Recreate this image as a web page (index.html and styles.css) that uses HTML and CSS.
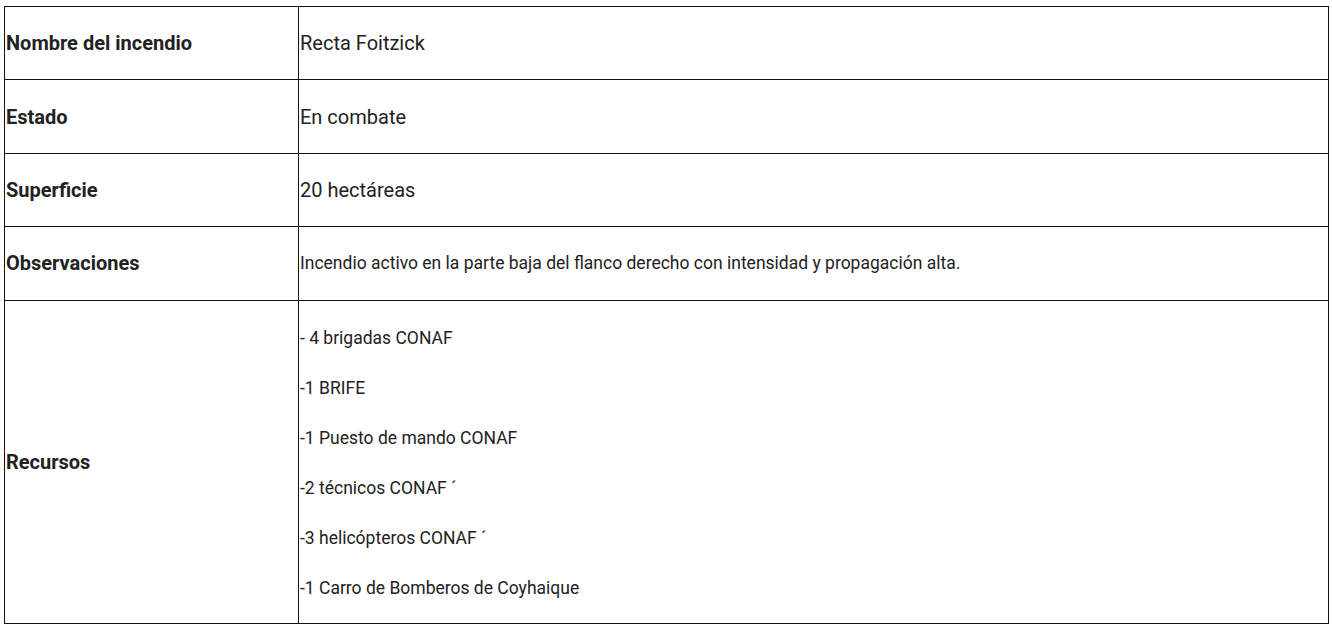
FILE: index.html
```html
<!DOCTYPE html>
<html lang="es">
<head>
<meta charset="utf-8">
<title>Incendio</title>
<link rel="stylesheet" href="styles.css">
</head>
<body>
<div class="wrap">
<table class="info">
  <tbody>
    <tr class="row">
      <th class="label">Nombre del incendio</th>
      <td class="value big">Recta Foitzick</td>
    </tr>
    <tr class="row">
      <th class="label">Estado</th>
      <td class="value big">En combate</td>
    </tr>
    <tr class="row">
      <th class="label">Superficie</th>
      <td class="value big">20 hectáreas</td>
    </tr>
    <tr class="row">
      <th class="label">Observaciones</th>
      <td class="value small">Incendio activo en la parte baja del flanco derecho con intensidad y propagación alta.</td>
    </tr>
    <tr>
      <th class="label">Recursos</th>
      <td class="value small list">
        <p>- 4 brigadas CONAF</p>
        <p>-1 BRIFE</p>
        <p>-1 Puesto de mando CONAF</p>
        <p>-2 técnicos CONAF ´</p>
        <p>-3 helicópteros CONAF ´</p>
        <p>-1 Carro de Bomberos de Coyhaique</p>
      </td>
    </tr>
  </tbody>
</table>
</div>
</body>
</html>
```

FILE: styles.css
```css
html, body {
  margin: 0;
  padding: 0;
  background: #fff;
}
.wrap {
  padding: 6px 3px 0 4px;
}
.info {
  width: 1325px;
  border-collapse: collapse;
  font-family: Roboto, "Liberation Sans", sans-serif;
  color: #222;
}
.info th, .info td {
  border: 1px solid #111;
  padding: 0 1px;
  vertical-align: middle;
  text-align: left;
}
.row {
  height: 73.4px;
}
.info .label {
  width: 291px;
  font-size: 20px;
  font-weight: 700;
}
.info .big {
  font-size: 20px;
}
.info .small {
  font-size: 17.5px;
}
.info .list {
  padding: 25px 1px 23px;
}
.list p {
  margin: 0 0 26px;
  line-height: 24px;
}
.list p:last-child {
  margin-bottom: 0;
}
```
